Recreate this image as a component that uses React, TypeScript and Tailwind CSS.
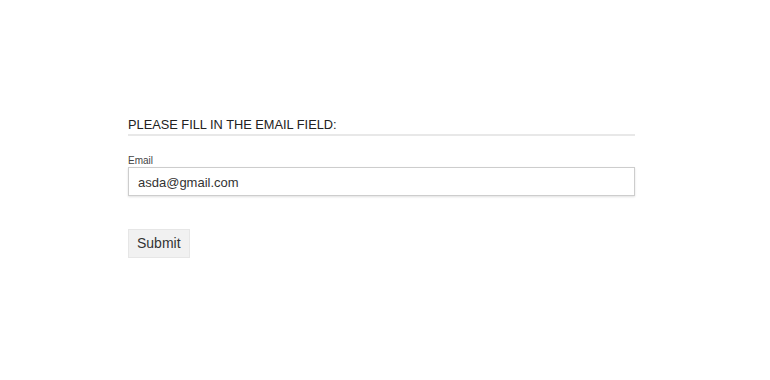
import { useState } from 'react'

export default function App() {
  const [email, setEmail] = useState('asda@gmail.com')

  return (
    <div className="min-h-[380px] bg-white font-['Liberation_Sans',Arial,sans-serif] text-[#222]">
      <form
        className="ml-[128px] w-[507px] pt-[117px]"
        onSubmit={(e) => e.preventDefault()}
      >
        {/* Heading */}
        <h2 className="border-b-2 border-[#e8e8e8] pb-[2px] text-[12.8px] leading-[15px] uppercase">
          Please fill in the email field:
        </h2>

        {/* Email field */}
        <label className="mt-[19px] block text-[10px] leading-[12px] text-[#444]">Email</label>
        <input
          type="email"
          autoFocus
          value={email}
          onChange={(e) => setEmail(e.target.value)}
          className="block h-[29px] w-full border border-[#cdcdcd] bg-white px-[9px] pt-[2px] text-[13px] text-[#333] caret-[#333] shadow-[0_1px_2px_rgba(0,0,0,0.12)] outline-none"
        />

        {/* Submit */}
        <button
          type="submit"
          className="mt-[33px] h-[29px] border border-[#e6e6e6] bg-[#f1f1f1] px-[8px] text-[14px] text-[#333]"
        >
          Submit
        </button>
      </form>
    </div>
  )
}
